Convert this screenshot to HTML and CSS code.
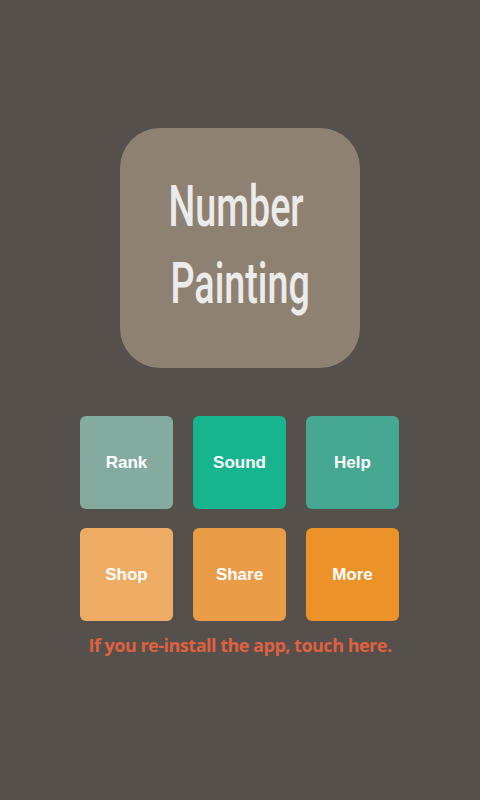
FILE: index.html
```html
<!DOCTYPE html>
<html>
<head>
<meta charset="utf-8">
<link rel="stylesheet" href="styles.css">
</head>
<body>
<div class="screen">
  <div class="logo">
    <span class="logo-line line-first">Number</span>
    <span class="logo-line">Painting</span>
  </div>
  <div class="grid">
    <div class="btn rank">Rank</div>
    <div class="btn sound">Sound</div>
    <div class="btn help">Help</div>
    <div class="btn shop">Shop</div>
    <div class="btn share">Share</div>
    <div class="btn more">More</div>
  </div>
  <div class="reinstall">If you re-install the app, touch here.</div>
</div>
</body>
</html>
```
FILE: styles.css
```css
html, body {
  margin: 0;
  padding: 0;
  background: #55504b;
}
.screen {
  width: 480px;
  height: 800px;
  display: flex;
  flex-direction: column;
  align-items: center;
  padding-top: 128px;
  box-sizing: border-box;
}
.logo {
  width: 240px;
  height: 240px;
  border-radius: 40px;
  background: #8f8171;
  display: flex;
  flex-direction: column;
  align-items: center;
  justify-content: center;
  padding-bottom: 6px;
  box-sizing: border-box;
  color: #ebebeb;
  font-family: Roboto, "Liberation Sans", sans-serif;
  font-weight: 500;
  font-size: 58px;
  line-height: 77px;
}
.logo-line {
  display: block;
  transform: scaleX(0.65);
}
.line-first {
  margin-right: 8px;
}
.grid {
  margin-top: 48px;
  margin-right: 1px;
  display: grid;
  grid-template-columns: repeat(3, 93px);
  grid-auto-rows: 93px;
  column-gap: 20px;
  row-gap: 19px;
}
.btn {
  border-radius: 6px;
  display: flex;
  align-items: center;
  justify-content: center;
  color: #ffffff;
  font-family: "Liberation Sans", Arial, sans-serif;
  font-weight: bold;
  font-size: 17px;
}
.rank { background: #84aba0; }
.sound { background: #16b48f; }
.help { background: #46a893; }
.shop { background: #eeac64; }
.share { background: #eb9c47; }
.more { background: #eb9228; }
.reinstall {
  margin-top: 12px;
  color: #e0603f;
  font-family: "Open Sans", sans-serif;
  font-weight: bold;
  font-size: 18px;
  line-height: 24px;
  letter-spacing: -0.5px;
}
```
